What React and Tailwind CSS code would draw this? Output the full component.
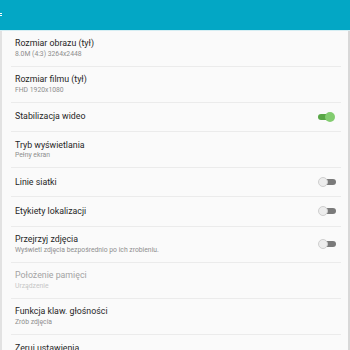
import React from "react";

function Toggle({ on }) {
  return (
    <div className="relative w-[18px] h-[10px] shrink-0">
      <div
        className={
          "absolute top-[2px] h-[6px] rounded-full " +
          (on ? "left-0 w-[15px] bg-[#58a646]" : "left-[4px] w-[14px] bg-[#7a7a7a]")
        }
      />
      <div
        className={
          "absolute top-0 w-[10px] h-[10px] rounded-full " +
          (on ? "left-[7px] bg-[#82cc6f]" : "left-0 bg-[#ededed] border border-[#cfcfcf]")
        }
      />
    </div>
  );
}

const rows = [
  { t: "Rozmiar obrazu (tył)", s: "8.0M (4:3) 3264x2448" },
  { t: "Rozmiar filmu (tył)", s: "FHD 1920x1080" },
  { t: "Stabilizacja wideo", toggle: true, on: true },
  { t: "Tryb wyświetlania", s: "Pełny ekran" },
  { t: "Linie siatki", toggle: true },
  { t: "Etykiety lokalizacji", toggle: true },
  { t: "Przejrzyj zdjęcia", s: "Wyświetl zdjęcia bezpośrednio po ich zrobieniu.", toggle: true },
  { t: "Położenie pamięci", s: "Urządzenie", disabled: true },
  { t: "Funkcja klaw. głośności", s: "Zrób zdjęcia" },
  { t: "Zeruj ustawienia" },
];

export default function App() {
  return (
    <div
      className="w-[350px] h-[350px] overflow-hidden bg-[#fafafa]"
      style={{ fontFamily: "Roboto, 'Noto Sans', sans-serif" }}
    >
      <div className="h-[30.5px] bg-[#03a7c5] border-b border-[#d6eef3] flex items-center">
        <div className="flex flex-col gap-[1.5px] ml-0 -mt-[1px]">
          <div className="w-[2px] h-[1px] bg-white" />
          <div className="w-[2px] h-[1px] bg-white" />
        </div>
      </div>
      <div className="h-full border-l-2 border-r-2 border-l-[#e2e2e2] border-r-[#d8d8d8] pl-[9px] pr-[7px]">
        {rows.map((r, i) => (
          <div
            key={i}
            className={
              "flex items-center justify-between border-b border-[#ebebeb] pl-[4px] pr-[5px] " +
              (r.s ? "h-[36px]" : "h-[29.4px]")
            }
          >
            <div className="flex flex-col">
              <div
                className={
                  "text-[8.8px] leading-[11px] " +
                  (r.disabled ? "text-[#a3a3a3]" : "text-[#262626]")
                }
              >
                {r.t}
              </div>
              {r.s && (
                <div
                  className={
                    "text-[6.8px] leading-[8px] mt-[0.5px] " +
                    (r.disabled ? "text-[#c6c6c6]" : "text-[#8e8e8e]")
                  }
                >
                  {r.s}
                </div>
              )}
            </div>
            {r.toggle && <Toggle on={r.on} />}
          </div>
        ))}
      </div>
    </div>
  );
}
